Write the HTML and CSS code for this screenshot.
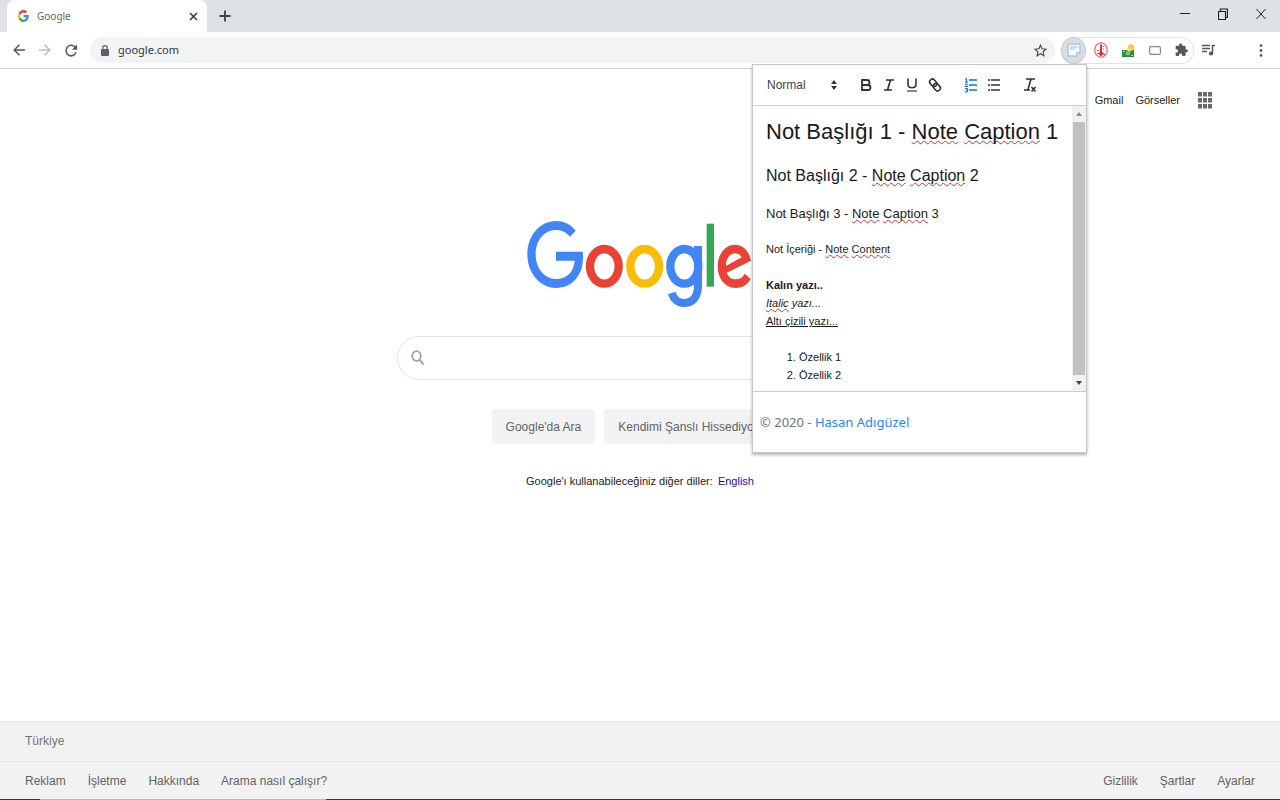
FILE: index.html
```
<!DOCTYPE html>
<html lang="tr">
<head>
<meta charset="utf-8">
<title>Google</title>
<link rel="stylesheet" href="styles.css">
</head>
<body>
<header class="browser">
  <div class="tabstrip">
    <div class="tab">
      <svg class="favicon" viewBox="0 0 48 48" preserveAspectRatio="none"><path fill="#ea4335" d="M24 9.500c3.500 0 6.700 1.200 9.200 3.600l6.900-6.900C35.900 2.400 30.500 0 24 0 14.600 0 6.500 5.400 2.600 13.200l8 6.200C12.400 13.700 17.700 9.500 24 9.500z"/><path fill="#4285f4" d="M47 24.500c0-1.600-.2-3.100-.4-4.500H24v9h12.900c-.6 3-2.300 5.500-4.800 7.200l7.700 6C44.400 38 47 31.800 47 24.500z"/><path fill="#fbbc05" d="M10.500 28.600A14.500 14.500 0 0 1 10.500 19.400l-8-6.200a24 24 0 0 0 0 21.600z"/><path fill="#34a853" d="M24 48c6.500 0 11.900-2.100 15.900-5.800l-7.700-6c-2.200 1.500-4.900 2.300-8.200 2.300-6.300 0-11.600-4.200-13.500-9.900l-8 6.200C6.500 42.600 14.600 48 24 48z"/></svg>
      <span class="tab-title">Google</span>
      <button class="icon-btn tab-close" aria-label="Sekmeyi kapat"><svg width="9" height="9" viewBox="0 0 9 9"><path d="M1 1l7 7M8 1L1 8" stroke="#3c4043" stroke-width="1.600"/></svg></button>
    </div>
    <button class="icon-btn new-tab" aria-label="Yeni sekme"><svg width="12" height="12" viewBox="0 0 12 12"><path d="M6 0.500v11M0.500 6h11" stroke="#3c4043" stroke-width="1.800"/></svg></button>
    <div class="window-controls">
      <button class="icon-btn" aria-label="Simge durumuna küçült"><svg width="10" height="12" viewBox="0 0 10 12"><path d="M0 5.500h10" stroke="#222"/></svg></button>
      <button class="icon-btn" aria-label="Geri yükle"><svg width="10" height="12" viewBox="0 0 10 12"><path d="M0.500 3.500h7v8h-7zM2.500 3v-2h7v8.500h-1.500" fill="none" stroke="#222" stroke-width="1.200"/></svg></button>
      <button class="icon-btn" aria-label="Kapat"><svg width="10" height="12" viewBox="0 0 10 12"><path d="M0.500 1l9 10M9.500 1l-9 10" stroke="#222"/></svg></button>
    </div>
  </div>
  <div class="toolbar">
    <div class="nav-buttons">
      <button class="icon-btn" aria-label="Geri"><svg width="12" height="12" viewBox="0 0 12 12"><path d="M12 6H1.500M6.500 0.800L1.200 6l5.300 5.200" fill="none" stroke="#54585c" stroke-width="1.500"/></svg></button>
      <button class="icon-btn" aria-label="İleri"><svg width="12" height="12" viewBox="0 0 12 12"><path d="M0 6h10.500M5.500 0.800L10.800 6l-5.300 5.200" fill="none" stroke="#b9bcbf" stroke-width="1.500"/></svg></button>
      <button class="icon-btn" aria-label="Yenile"><svg width="12" height="13" viewBox="0 0 12 13"><path d="M10.300 3.600A5 5.300 0 1 0 10.900 8.200" fill="none" stroke="#54585c" stroke-width="1.500"/><path d="M12 0.500v5.300H7z" fill="#54585c"/></svg></button>
    </div>
    <div class="omnibox">
      <svg width="8" height="11" viewBox="0 0 8 11"><rect y="4" width="8" height="7" rx="1" fill="#5f6368"/><path d="M1.800 5V2.800a2.200 2.200 0 0 1 4.400 0V5" fill="none" stroke="#5f6368" stroke-width="1.200"/></svg>
      <input class="url" type="text" value="google.com" aria-label="Adres">
      <button class="icon-btn" aria-label="Yer işareti ekle"><svg width="13" height="13" viewBox="0 0 13 13"><path d="M6.500 1.200l1.600 3.600 3.900.4-2.900 2.600.8 3.900-3.400-2-3.400 2 .8-3.900L1 5.200l3.900-.4z" fill="none" stroke="#4a4d51" stroke-width="1.200"/></svg></button>
    </div>
    <div class="extensions">
      <button class="icon-btn ext-active" aria-label="Notlar"><svg width="14" height="14" viewBox="0 0 14 14"><path d="M1 1h12v8.500L9.500 13H1z" fill="#f4f9ff" stroke="#a5c5e8" stroke-width="1.300"/><path d="M3 4h8M3 6h5" stroke="#a5c5e8"/><path d="M13 9.500H9.500V13" fill="#cfe0f4" stroke="#a5c5e8"/></svg></button>
      <button class="icon-btn" aria-label="Termometre"><svg width="14" height="16" viewBox="0 0 14 16"><ellipse cx="7" cy="8" rx="6.300" ry="7.200" fill="#fff" stroke="#ef6a6a" stroke-width="1.200"/><path d="M6 2.500h2v7.500a2 2 0 1 1-2 0z" fill="#e12b32"/><path d="M3 8.500h2M9 4.500h1M9 7h1M8 10.500l3 2.500M3 11.500h2" stroke="#e84c50" stroke-width="1.200"/></svg></button>
      <button class="icon-btn" aria-label="Döviz"><svg width="13" height="13" viewBox="0 0 13 13"><rect y="6" width="12" height="7" fill="#2c8c3c"/><ellipse cx="6" cy="9.500" rx="2.500" ry="2" fill="#75c67c"/><path d="M1 7.500h2M9 11.500h2" stroke="#a7dda9"/><circle cx="9" cy="3.500" r="3.200" fill="#f7c933"/><circle cx="7" cy="5.500" r="2.200" fill="#ffda57"/></svg></button>
      <button class="icon-btn" aria-label="Ekran görüntüsü"><svg width="12" height="9" viewBox="0 0 12 9"><rect x=".6" y=".6" width="10.800" height="7.800" rx="1.500" fill="none" stroke="#888" stroke-width="1.200"/></svg></button>
      <button class="icon-btn" aria-label="Uzantılar"><svg width="13" height="14" viewBox="1 1 22 22"><path fill="#54585c" d="M20.500 11H19V7a2 2 0 0 0-2-2h-4V3.500a2.500 2.500 0 0 0-5 0V5H4a2 2 0 0 0-2 2v3.800h1.500a2.700 2.700 0 0 1 0 5.400H2V20a2 2 0 0 0 2 2h3.800v-1.500a2.700 2.700 0 0 1 5.400 0V22H17a2 2 0 0 0 2-2v-4h1.500a2.500 2.500 0 0 0 0-5z"/></svg></button>
    </div>
    <button class="icon-btn media" aria-label="Medya"><svg width="13" height="12" viewBox="0 0 13 12"><path d="M0 1.500h8M0 4.500h8M0 7.500h5M10.500 9.500V1.500H13" fill="none" stroke="#54585c" stroke-width="1.500"/><circle cx="9" cy="9.500" r="2.100" fill="#54585c"/></svg></button>
    <button class="icon-btn menu" aria-label="Menü"><svg width="4" height="13" viewBox="0 0 4 13"><g fill="#54585c"><circle cx="2" cy="1.600" r="1.400"/><circle cx="2" cy="6.500" r="1.400"/><circle cx="2" cy="11.400" r="1.400"/></g></svg></button>
  </div>
</header>

<nav class="top-nav">
  <a href="#">Gmail</a>
  <a href="#">Görseller</a>
  <button class="icon-btn apps" aria-label="Google uygulamaları"><svg width="14" height="17" viewBox="0 0 14 17"><g fill="#666a6e"><path d="M0 0h4v4.500H0zM5 0h4v4.500H5zM10 0h4v4.500h-4zM0 6h4v4.500H0zM5 6h4v4.500H5zM10 6h4v4.500h-4zM0 12h4v4.500H0zM5 12h4v4.500H5zM10 12h4v4.500h-4z"/></g></svg></button>
</nav>

<main class="search-page">
  <svg class="logo" viewBox="45 20 690 279" role="img" aria-label="Google">
    <path fill="#4285f4" d="M197 61C182 42 162 32 138 32 90 32 52 76 52 132s38 101 86 101c49 0 81-38 81-92 0-6 0-11-1-17h-80v27h56c-3 35-24 55-56 55-35 0-61-32-61-74s26-73 61-73c18 0 32 8 42 20z"/>
    <ellipse cx="283" cy="168" rx="43" ry="52" fill="none" stroke="#ea4335" stroke-width="25"/>
    <ellipse cx="404" cy="168" rx="43" ry="52" fill="none" stroke="#fbbc05" stroke-width="25"/>
    <ellipse cx="523" cy="168" rx="42" ry="52" fill="none" stroke="#4285f4" stroke-width="25"/>
    <path fill="none" stroke="#4285f4" stroke-width="24" d="M564 107v118c0 37-18 53-42 53-17 0-31-11-37-30"/>
    <path fill="#34a853" d="M590 40h22v189h-22z"/>
    <path fill="#ea4335" fill-rule="evenodd" d="M723 151c-6-30-24-48-48-48-29 0-52 28-52 65s23 65 54 65c21 0 36-11 45-27l-18-16c-6 11-14 17-27 17s-22-7-27-20zM648 167c-1-22 12-38 27-38 10 0 16 5 20 12z"/>
  </svg>
  <form class="search-form">
    <div class="search-box">
      <svg width="14" height="16" viewBox="0 0 14 16"><ellipse cx="5.500" cy="6" rx="4.300" ry="4.900" fill="none" stroke="#9aa0a6" stroke-width="1.700"/><path d="M8.500 9.500l4 5" stroke="#9aa0a6" stroke-width="2"/></svg>
      <input type="text" aria-label="Ara">
    </div>
    <div class="search-buttons">
      <button type="button">Google'da Ara</button>
      <button type="button">Kendimi Şanslı Hissediyorum</button>
    </div>
  </form>
  <p class="languages">Google'ı kullanabileceğiniz diğer diller: <a href="#">English</a></p>
</main>

<footer class="site-footer">
  <div class="country">Türkiye</div>
  <div class="footer-links">
    <nav><a href="#">Reklam</a><a href="#">İşletme</a><a href="#">Hakkında</a><a href="#">Arama nasıl çalışır?</a></nav>
    <nav><a href="#">Gizlilik</a><a href="#">Şartlar</a><a href="#">Ayarlar</a></nav>
  </div>
</footer>
<div class="taskbar-edge"></div>

<aside class="popup">
  <div class="editor-toolbar">
    <label class="format">
      <select aria-label="Biçim"><option>Normal</option></select>
      <svg width="6" height="10" viewBox="0 0 6 10"><path d="M0 4l3-4 3 4zM0 6l3 4 3-4z" fill="#333"/></svg>
    </label>
    <div class="tool-group">
      <button class="icon-btn" aria-label="Kalın"><svg width="18" height="18" viewBox="0 0 18 18"><path d="M5 4h5a2.500 2.500 0 0 1 0 5H5zM5 9h6a2.500 2.500 0 0 1 0 5H5z" fill="none" stroke="#333" stroke-width="1.800"/></svg></button>
      <button class="icon-btn" aria-label="İtalik"><svg width="18" height="18" viewBox="0 0 18 18"><path d="M6 4h8M4 14h8M10.500 4l-3 10" fill="none" stroke="#333" stroke-width="1.700"/></svg></button>
      <button class="icon-btn" aria-label="Altı çizili"><svg width="18" height="18" viewBox="0 0 18 18"><path d="M5 2.500V8c0 5 8 5 8 0V2.500" fill="none" stroke="#333" stroke-width="1.600"/><path d="M4 15h10" stroke="#333" stroke-width="1.200"/></svg></button>
      <button class="icon-btn" aria-label="Bağlantı"><svg width="18" height="18" viewBox="0 0 18 18"><g fill="none" stroke="#333" stroke-width="1.600"><rect x="3" y="4" width="8" height="5.500" rx="2.700" transform="rotate(50 7 7)"/><rect x="7" y="8.500" width="8" height="5.500" rx="2.700" transform="rotate(50 11 11)"/></g></svg></button>
    </div>
    <div class="tool-group">
      <button class="icon-btn" aria-label="Numaralı liste"><svg width="18" height="18" viewBox="0 0 18 18"><path d="M7 4h8M7 9h8M7 14h8" stroke="#0b6fdb" stroke-width="1.700"/><path d="M3 3l1.500-.5V6M3 6h3M3 8h2.500L3 10.500h3M3 12.500h2.500V16H3M3.500 14.200h2" fill="none" stroke="#0b6fdb"/></svg></button>
      <button class="icon-btn" aria-label="Madde listesi"><svg width="18" height="18" viewBox="0 0 18 18"><path d="M6 4h9M6 9h9M6 14h9M3 4h2M3 9h2M3 14h2" stroke="#333" stroke-width="1.600"/></svg></button>
    </div>
    <button class="icon-btn" aria-label="Biçimi temizle"><svg width="18" height="18" viewBox="0 0 18 18"><path d="M5 3h9M10 3L7 13.500M3 14h6M10.500 11l4 4.500M14.500 11l-4 4.500" fill="none" stroke="#333" stroke-width="1.600"/></svg></button>
  </div>
  <div class="editor">
    <div class="note" contenteditable="true" spellcheck="false">
      <h1>Not Başlığı 1 - <span class="typo">Note</span> <span class="typo">Caption</span> 1</h1>
      <h2>Not Başlığı 2 - <span class="typo">Note</span> <span class="typo">Caption</span> 2</h2>
      <h3>Not Başlığı 3 - <span class="typo">Note</span> <span class="typo">Caption</span> 3</h3>
      <p class="spaced">Not İçeriği - <span class="typo">Note</span> <span class="typo">Content</span></p>
      <p><strong>Kalın yazı..</strong></p>
      <p><em><span class="typo">Italic</span> yazı...</em></p>
      <p class="spaced"><u>Altı çizili yazı...</u></p>
      <ol><li>Özellik 1</li><li>Özellik 2</li></ol>
    </div>
    <div class="scrollbar">
      <svg width="6" height="4" viewBox="0 0 6 4"><path d="M0 4l3-4 3 4z" fill="#8a8a8a"/></svg>
      <div class="thumb"></div>
      <svg width="6" height="4" viewBox="0 0 6 4"><path d="M0 0l3 4 3-4z" fill="#444"/></svg>
    </div>
  </div>
  <div class="credit">© 2020 - <a href="#">Hasan Adıgüzel</a></div>
</aside>
</body>
</html>
```
FILE: styles.css
```
* { box-sizing: border-box; }
body {
  position: relative;
  display: flex;
  flex-direction: column;
  min-height: 100vh;
  margin: 0;
  background: #fff;
  color: #222;
  font: 11px/18px "Liberation Sans", Arial, sans-serif;
}
a { color: inherit; text-decoration: none; }
svg { display: block; flex: none; }
.icon-btn {
  display: flex;
  align-items: center;
  justify-content: center;
  padding: 0;
  border: 0;
  background: none;
}

/* Browser chrome */
.browser { font-family: "Noto Sans", "Open Sans", sans-serif; }
.tabstrip {
  display: flex;
  align-items: center;
  height: 32px;
  padding: 0 14px 0 7px;
  background: #dee1e6;
}
.tab {
  display: flex;
  align-items: center;
  gap: 8px;
  width: 200px;
  height: 32px;
  padding: 0 9px 0 11px;
  border-radius: 8px 8px 0 0;
  background: #fff;
}
.favicon { width: 11px; height: 12px; }
.tab-title { flex: 1; color: #5f6368; font-size: 10px; }
.new-tab { margin-left: 12px; }
.window-controls { display: flex; gap: 28px; margin-left: auto; padding-bottom: 4px; }
.toolbar {
  display: flex;
  align-items: center;
  height: 37px;
  padding: 0 17px 0 13px;
  border-bottom: 1px solid #d0d1d8;
}
.nav-buttons { display: flex; gap: 14px; }
.omnibox {
  display: flex;
  flex: 1;
  align-items: center;
  gap: 9px;
  height: 26px;
  margin-left: 13px;
  padding: 0 8px 0 11px;
  border-radius: 13px;
  background: #f1f3f4;
}
.url {
  flex: 1;
  min-width: 0;
  padding: 0;
  border: 0;
  outline: 0;
  background: none;
  color: #33363a;
  font: 11px/18px "Noto Sans", "Open Sans", sans-serif;
}
.extensions {
  display: flex;
  align-items: center;
  gap: 14px;
  height: 27px;
  margin-left: 6px;
  padding-right: 5px;
  border: 1px solid #e1e3e6;
  border-left: 0;
  border-radius: 13px;
}
.ext-active {
  width: 25px;
  height: 27px;
  margin-right: -6px;
  border: 1px solid #c6c8ca;
  border-radius: 50%;
  background: #dcdddf;
}
.media { margin-left: 8px; }
.menu { margin-left: 44px; }

/* Search page */
.top-nav {
  display: flex;
  align-items: center;
  justify-content: flex-end;
  gap: 12px;
  height: 62px;
  padding-right: 68px;
}
.apps { margin-left: 6px; }
.search-page {
  display: flex;
  flex: 1;
  flex-direction: column;
  align-items: center;
  padding-top: 86px;
}
.logo { width: 230px; height: 93px; }
.search-form { width: 38%; margin-top: 26px; }
.search-box {
  display: flex;
  align-items: center;
  gap: 12px;
  height: 44px;
  padding: 0 13px;
  border: 1px solid #e2e4e7;
  border-radius: 22px;
}
.search-box input { flex: 1; min-width: 0; border: 0; outline: 0; background: none; }
.search-buttons { display: flex; justify-content: center; gap: 9px; margin-top: 29px; }
.search-buttons button {
  height: 35px;
  padding: 0 14px;
  border: 0;
  border-radius: 4px;
  background: #f2f2f2;
  color: #5f6368;
  font: 12px/18px "Liberation Sans", Arial, sans-serif;
  white-space: nowrap;
}
.languages { margin: 28px 0 0; }
.languages a { margin-left: 2px; color: #1a0dab; }
.site-footer {
  border-top: 1px solid #e4e4e4;
  background: #f2f2f2;
  color: #5f6368;
  font-size: 12px;
}
.country { padding: 10px 25px 11px; border-bottom: 1px solid #e4e4e4; color: #757575; }
.footer-links { display: flex; justify-content: space-between; padding: 10px 25px 9px; }
.footer-links nav { display: flex; gap: 22px; }
.taskbar-edge {
  height: 1px;
  background: linear-gradient(90deg, #333842 40px, #bbb 40px, #bbb 326px, #333842 326px);
}

/* Note popup */
.popup {
  position: absolute;
  top: 64px;
  right: 193px;
  width: 335px;
  border: 1px solid #c6c6c6;
  background: #fff;
  box-shadow: 0 2px 3px rgba(0, 0, 0, .3);
}
.editor-toolbar {
  display: flex;
  align-items: center;
  gap: 18px;
  height: 41px;
  padding: 0 14px;
  border-bottom: 1px solid #ccc;
}
.format { display: flex; align-items: center; justify-content: space-between; width: 70px; margin-right: 2px; }
.format select {
  padding: 0;
  border: 0;
  appearance: none;
  background: none;
  color: #444;
  font: 12px/18px "Liberation Sans", Arial, sans-serif;
}
.tool-group { display: flex; gap: 5px; }
.editor { display: flex; height: 286px; border-bottom: 1px solid #ccc; }
.note { flex: 1; min-width: 0; overflow: hidden; padding: 12px 13px; color: #1a1a1a; outline: 0; }
.note h1, .note h2, .note h3 { margin: 0; font-weight: 400; white-space: nowrap; }
.note h1 { margin-bottom: 18px; font-size: 22px; line-height: 28px; }
.note h2 { margin-bottom: 18px; font-size: 16px; line-height: 24px; }
.note h3 { margin-bottom: 18px; font-size: 13px; line-height: 16px; }
.note p { margin: 0; }
.note .spaced { margin-bottom: 18px; }
.note ol { margin: 0; padding-left: 33px; }
.typo {
  text-decoration: underline wavy #e8262d 1px;
  text-decoration-skip-ink: none;
  text-underline-offset: 1px;
}
.scrollbar {
  display: flex;
  flex-direction: column;
  align-items: center;
  gap: 6px;
  width: 14px;
  padding: 6px 1px;
  background: #f1f1f1;
}
.thumb { flex: 1; width: 12px; background: #c1c1c1; }
.credit {
  padding: 20px 7px;
  color: #6c757d;
  font: 13px/20px "Noto Sans", "Open Sans", sans-serif;
}
.credit a { color: #2684ff; }
```
